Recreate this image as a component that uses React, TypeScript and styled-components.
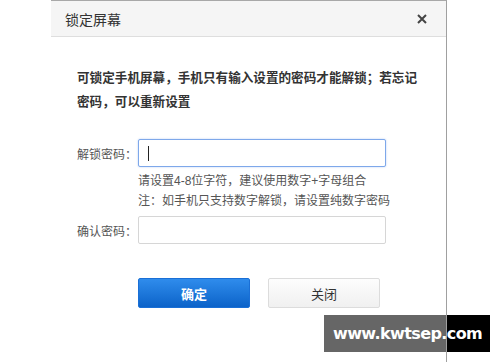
import React from 'react';
import styled, { createGlobalStyle } from 'styled-components';

const GlobalStyle = createGlobalStyle`
  html, body {
    margin: 0;
    padding: 0;
    background: #ffffff;
  }
  body {
    font-family: "Liberation Sans", "Noto Sans CJK SC", sans-serif;
  }
`;

const Page = styled.div`
  position: relative;
  width: 500px;
  height: 362px;
  overflow: hidden;
`;

const Dialog = styled.div`
  margin-left: 51px;
  width: 396px;
  height: 362px;
  box-sizing: border-box;
  border-top: 1px solid #a8a8a8;
  border-right: 1px solid #a0a0a0;
  background: #fff;
`;

const Header = styled.div`
  height: 35px;
  display: flex;
  align-items: center;
  justify-content: space-between;
  padding: 0 18px 0 14px;
  background: #f5f5f5;
  border-bottom: 1px solid #dedede;
`;

const Title = styled.div`
  font-size: 14px;
  color: #333;
`;

const CloseButton = styled.button`
  border: none;
  background: none;
  padding: 0;
  width: 12px;
  height: 12px;
  display: flex;
  align-items: center;
  justify-content: center;
  cursor: pointer;
`;

const Body = styled.div`
  padding: 29px 0 0 26px;
`;

const Intro = styled.p`
  margin: 0;
  font-size: 12.6px;
  font-weight: bold;
  line-height: 24px;
  color: #333;
  white-space: nowrap;
`;

const Form = styled.div`
  margin-top: 25px;
  display: grid;
  grid-template-columns: 61px 248px;
  align-items: center;
`;

const Label = styled.label`
  font-size: 12px;
  color: #555;
  white-space: nowrap;
`;

const InputWrap = styled.div`
  position: relative;
  width: 248px;
  height: 28px;
`;

const Input = styled.input<{ $focused?: boolean }>`
  box-sizing: border-box;
  width: 248px;
  height: 28px;
  padding: 0 9px;
  font-size: 14px;
  outline: none;
  border-radius: 2px;
  border: 1px solid ${(p) => (p.$focused ? '#7ea8ea' : '#d6d6d6')};
  box-shadow: ${(p) => (p.$focused ? '0 0 2px rgba(90,140,230,0.45)' : 'none')};
  caret-color: transparent;
`;

const Caret = styled.span`
  position: absolute;
  left: 10px;
  top: 7px;
  width: 1px;
  height: 15px;
  background: #222;
  pointer-events: none;
`;

const Hints = styled.div`
  grid-column: 2;
  padding: 4px 0 5px;
  font-size: 12px;
  line-height: 20px;
  color: #555;
  white-space: nowrap;
`;

const Buttons = styled.div`
  margin: 34px 0 0 61px;
  display: flex;
  gap: 18px;
`;

const Button = styled.button<{ $primary?: boolean }>`
  width: 112px;
  height: 30px;
  border-radius: 2px;
  font-size: 13px;
  font-family: inherit;
  cursor: pointer;
  border: 1px solid ${(p) => (p.$primary ? '#1a6fd6' : '#dcdcdc')};
  color: ${(p) => (p.$primary ? '#fff' : '#333')};
  font-weight: ${(p) => (p.$primary ? 'bold' : 'normal')};
  background: ${(p) =>
    p.$primary
      ? 'linear-gradient(#2f8cec, #0c63c9)'
      : 'linear-gradient(#fdfdfd, #f0f0f0)'};
`;

const Watermark = styled.div`
  position: absolute;
  left: 324px;
  top: 315px;
  width: 166px;
  height: 37px;
  display: flex;
  align-items: center;
  padding-left: 9px;
  box-sizing: border-box;
  background: linear-gradient(to right, #666 0, #666 122px, #a0a0a0 122px, #a0a0a0 123px, #000 123px);
  color: #fff;
  font-family: "DejaVu Sans", sans-serif;
  font-weight: bold;
  font-size: 16px;
  letter-spacing: -0.6px;
  white-space: nowrap;
`;

export default function App() {
  return (
    <Page>
      <GlobalStyle />
      <Dialog>
        <Header>
          <Title>锁定屏幕</Title>
          <CloseButton aria-label="关闭">
            <svg width="10" height="10" viewBox="0 0 10 10">
              <path d="M1 1 L9 9 M9 1 L1 9" stroke="#444" strokeWidth="2" />
            </svg>
          </CloseButton>
        </Header>
        <Body>
          <Intro>
            可锁定手机屏幕，手机只有输入设置的密码才能解锁；若忘记
            <br />
            密码，可以重新设置
          </Intro>
          <Form>
            <Label>解锁密码：</Label>
            <InputWrap>
              <Input type="password" $focused />
              <Caret />
            </InputWrap>
            <Hints>
              <div>请设置4-8位字符，建议使用数字+字母组合</div>
              <div>注：如手机只支持数字解锁，请设置纯数字密码</div>
            </Hints>
            <Label>确认密码：</Label>
            <InputWrap>
              <Input type="password" />
            </InputWrap>
          </Form>
          <Buttons>
            <Button $primary>确定</Button>
            <Button>关闭</Button>
          </Buttons>
        </Body>
      </Dialog>
      <Watermark>www.kwtsep.com</Watermark>
    </Page>
  );
}
